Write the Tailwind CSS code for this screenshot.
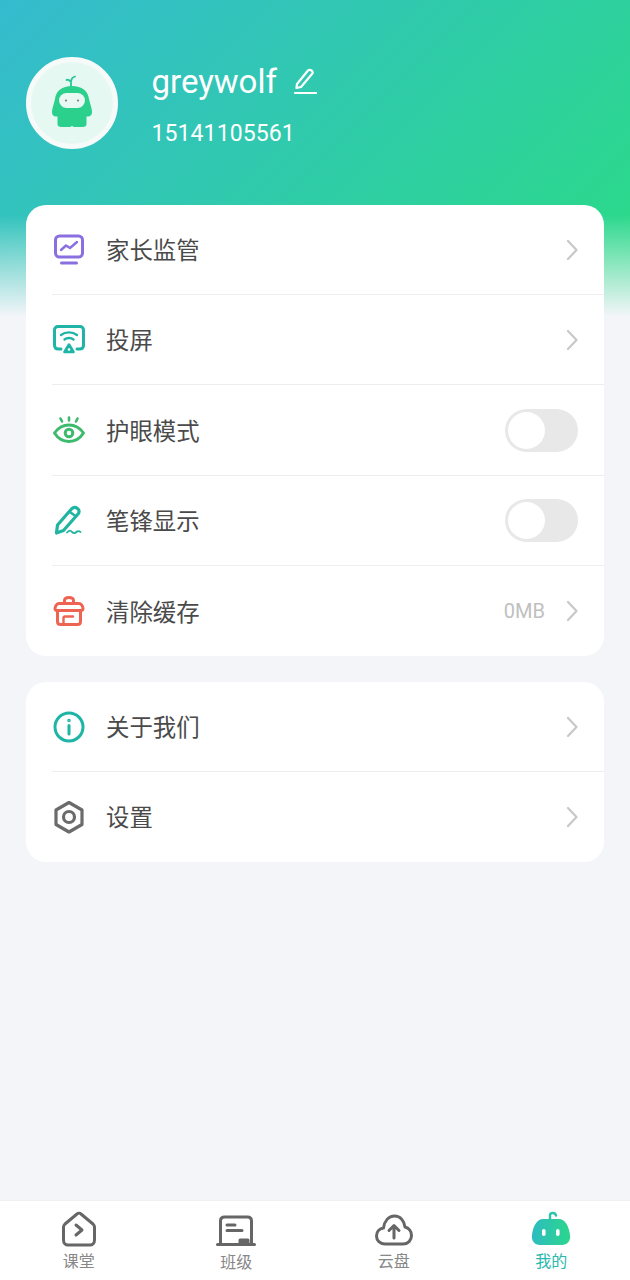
<!DOCTYPE html>
<html lang="zh-CN">
<head>
  <meta charset="UTF-8" />
  <meta name="viewport" content="width=device-width, initial-scale=1" />
  <title>我的</title>
  <script src="https://cdn.jsdelivr.net/npm/@tailwindcss/browser@4"></script>
</head>
<body class="m-0 bg-[#f4f5f9] font-['Roboto','Noto_Sans_CJK_SC',sans-serif]">
  <div class="relative w-[630px] h-[1280px] overflow-hidden flex flex-col">
    <!-- header background -->
    <div class="absolute top-0 left-0 w-full h-[316px] bg-[linear-gradient(135deg,#35bbcf_0%,#2bd98a_92%)]"></div>
    <div class="absolute top-[215px] left-0 w-full h-[102px] bg-gradient-to-b from-[#f4f5f9]/0 to-[#f4f5f9]"></div>

    <div class="relative flex-1 flex flex-col">
      <!-- profile -->
      <header class="h-[205px] flex items-start pl-[26px] pt-[57px] gap-[33.500px] shrink-0">
        <div class="w-[92px] h-[92px] rounded-full bg-[#e6f8f2] border-[5px] border-[#f6fbfa] flex items-center justify-center">
          <svg width="46" height="56" viewBox="0 0 46 56">
            <path d="M22 12V6M22 7C20 4.500 18 4.500 17.500 5M22 6C22.500 3.500 24 2 26 1.500" fill="none" stroke="#29c59a" stroke-width="1.800" stroke-linecap="round"/>
            <path d="M23 11C13 11 7 16 6 24C5 29 3 33 3 37C3 41 6 42 8.500 41.500V49C8.500 51 10 52 12 52H20C21.500 52 22.500 51.500 23 50.500C23.500 51.500 24.500 52 26 52H34C36 52 37.500 51 37.500 49V41.500C40 42 43 41 43 37C43 33 41 29 40 24C39 16 33 11 23 11Z" fill="#2bd08d"/>
            <rect x="10" y="18" width="26" height="15" rx="7.500" fill="#e8f8f3"/>
            <circle cx="17" cy="25.500" r="0.900" fill="#666"/>
            <circle cx="29" cy="25.500" r="0.900" fill="#666"/>
          </svg>
        </div>
        <div class="flex flex-col text-white">
          <div class="flex items-center h-[50px]">
            <span class="text-[33px] leading-[50px]">greywolf</span>
            <svg class="ml-[16px] mb-[2px]" width="24" height="28" viewBox="0 0 24 28" fill="none" stroke="#fff" stroke-width="2.200" stroke-linecap="round" stroke-linejoin="round">
              <path d="M4 17L15 3.500C16 2.500 17 2.500 18.500 3.500C20 4.500 20 6 19 7L8 20L3.500 21Z"/>
              <path d="M2 26H23"/>
            </svg>
          </div>
          <span class="text-[23px] leading-[30px] mt-[12px] tracking-[0.1px]">15141105561</span>
        </div>
      </header>

      <main class="px-[26px] flex flex-col gap-[26px]">
        <!-- card 1 -->
        <section class="bg-white rounded-[20px] pl-[26px] h-[451px] flex flex-col">
          <div class="h-[90px] border-b border-[#eeeeee] flex items-center pr-[26px]">
            <svg class="w-[34px] h-[34px] shrink-0" viewBox="0 0 34 34" fill="none" stroke="#8a6fe0" stroke-width="3" stroke-linecap="round" stroke-linejoin="round">
              <rect x="3.500" y="3" width="27" height="21" rx="4"/>
              <path d="M9 17L14 12.500L18 15L25 9" stroke-width="2.400"/>
              <path d="M9.500 30H24.500"/>
            </svg>
            <span class="ml-[20px] flex-1 text-[23.400px] pt-[5px] text-[#4a4a4a]">家长监管</span>
            <svg width="12" height="22" viewBox="0 0 12 22" fill="none" stroke="#c8c8c8" stroke-width="2.200" stroke-linecap="round" stroke-linejoin="round"><path d="M2 2L10.500 11L2 20"/></svg>
          </div>
          <div class="h-[90px] border-b border-[#eeeeee] flex items-center pr-[26px]">
            <svg class="w-[34px] h-[34px] shrink-0" viewBox="0 0 34 34" fill="none" stroke="#1fb5a6" stroke-width="3" stroke-linecap="round" stroke-linejoin="round">
              <path d="M9 26H6.500C4 26 2.500 24.500 2.500 22V7C2.500 5 4 3.500 6 3.500H28C30 3.500 31.500 5 31.500 7V22C31.500 24.500 30 26 27.500 26H25"/>
              <path d="M9 12C13.500 8.500 20.500 8.500 25 12" stroke-width="2.400"/>
              <path d="M12.500 16.500C15 14.500 19 14.500 21.500 16.500" stroke-width="2.400"/>
              <path d="M17 21.500L21.500 29H12.500Z" stroke-width="2.600" fill="#1fb5a6"/>
              <circle cx="17" cy="26.500" r="1.300" fill="#fff" stroke="none"/>
            </svg>
            <span class="ml-[20px] flex-1 text-[23.400px] pt-[5px] text-[#4a4a4a]">投屏</span>
            <svg width="12" height="22" viewBox="0 0 12 22" fill="none" stroke="#c8c8c8" stroke-width="2.200" stroke-linecap="round" stroke-linejoin="round"><path d="M2 2L10.500 11L2 20"/></svg>
          </div>
          <div class="h-[91px] border-b border-[#eeeeee] flex items-center pr-[26px]">
            <svg class="w-[34px] h-[34px] shrink-0" viewBox="0 0 34 34" fill="none" stroke="#3dbb6d" stroke-width="3" stroke-linecap="round" stroke-linejoin="round">
              <path d="M2.500 20C6 15 11 12 17 12C23 12 28 15 31.500 20C28 25.500 23 28.500 17 28.500C11 28.500 6 25.500 2.500 20Z"/>
              <circle cx="17" cy="20" r="3.800"/>
              <path d="M17 4.500V7.500M8.500 5.500L10 8.500M25.500 5.500L24 8.500" stroke-width="2.600"/>
            </svg>
            <span class="ml-[20px] flex-1 text-[23.400px] pt-[5px] text-[#4a4a4a]">护眼模式</span>
            <div class="w-[73px] h-[43px] rounded-full bg-[#e8e8e8] p-[3px]">
              <div class="w-[37px] h-[37px] rounded-full bg-white"></div>
            </div>
          </div>
          <div class="h-[90px] border-b border-[#eeeeee] flex items-center pr-[26px]">
            <svg class="w-[34px] h-[34px] shrink-0" viewBox="0 0 34 34" fill="none" stroke="#1fb5a0" stroke-width="3.200" stroke-linecap="round" stroke-linejoin="round">
              <path d="M5.500 21L19.500 5C21 3.500 23.500 3 25.500 4.500C27.500 6 27.500 8.500 26 10L11.500 26.500L4.500 29Z"/>
              <path d="M18 8L24 12.500" stroke-width="2.400"/>
              <path d="M15 28.500C17 26 18.500 26 20 28C21.500 29.500 23 29.500 24.500 28C25.500 27 27 27 28.500 28" stroke-width="1.800"/>
            </svg>
            <span class="ml-[20px] flex-1 text-[23.400px] pt-[5px] text-[#4a4a4a]">笔锋显示</span>
            <div class="w-[73px] h-[43px] rounded-full bg-[#e8e8e8] p-[3px]">
              <div class="w-[37px] h-[37px] rounded-full bg-white"></div>
            </div>
          </div>
          <div class="flex-1 flex items-center pr-[26px]">
            <svg class="w-[34px] h-[34px] shrink-0" viewBox="0 0 34 34" fill="none" stroke="#ee6352" stroke-width="3" stroke-linecap="round" stroke-linejoin="round">
              <path d="M12.500 9.500V6.500C12.500 4.500 14.500 3.500 17 3.500C19.500 3.500 21.500 4.500 21.500 6.500V9.500"/>
              <path d="M7 9.500H27C29 9.500 31 12 31 14.500C31 16 30 16.500 28.500 16.500H5.500C4 16.500 3 16 3 14.500C3 12 5 9.500 7 9.500Z"/>
              <path d="M5.500 17V27.500C5.500 29 6.500 30.500 8.500 30.500H25.500C27.500 30.500 28.500 29 28.500 27.500V17"/>
              <path d="M11.500 30V24C11.500 23 12 22.500 13 22.500H21" stroke-width="2.400"/>
            </svg>
            <span class="ml-[20px] flex-1 text-[23.400px] pt-[5px] text-[#4a4a4a]">清除缓存</span>
            <span class="text-[20px] text-[#c0c0c0] mr-[21px]">0MB</span>
            <svg width="12" height="22" viewBox="0 0 12 22" fill="none" stroke="#c8c8c8" stroke-width="2.200" stroke-linecap="round" stroke-linejoin="round"><path d="M2 2L10.500 11L2 20"/></svg>
          </div>
        </section>

        <!-- card 2 -->
        <section class="bg-white rounded-[20px] pl-[26px] h-[180px] flex flex-col">
          <div class="h-[90px] border-b border-[#eeeeee] flex items-center pr-[26px]">
            <svg class="w-[34px] h-[34px] shrink-0" viewBox="0 0 34 34" fill="none" stroke="#1fb5a6" stroke-width="3" stroke-linecap="round">
              <circle cx="17" cy="17" r="14"/>
              <path d="M17 15.500V24"/>
              <circle cx="17" cy="10.500" r="0.700" stroke-width="2.200"/>
            </svg>
            <span class="ml-[20px] flex-1 text-[23.400px] pt-[5px] text-[#4a4a4a]">关于我们</span>
            <svg width="12" height="22" viewBox="0 0 12 22" fill="none" stroke="#c8c8c8" stroke-width="2.200" stroke-linecap="round" stroke-linejoin="round"><path d="M2 2L10.500 11L2 20"/></svg>
          </div>
          <div class="flex-1 flex items-center pr-[26px]">
            <svg class="w-[34px] h-[34px] shrink-0" viewBox="0 0 34 34" fill="none" stroke="#6b6b6b" stroke-width="3.200" stroke-linejoin="round">
              <path d="M17 2.500L30 10V24.500L17 32L4 24.500V10Z"/>
              <circle cx="17" cy="17" r="5.500"/>
            </svg>
            <span class="ml-[20px] flex-1 text-[23.400px] pt-[4px] text-[#4a4a4a]">设置</span>
            <svg width="12" height="22" viewBox="0 0 12 22" fill="none" stroke="#c8c8c8" stroke-width="2.200" stroke-linecap="round" stroke-linejoin="round"><path d="M2 2L10.500 11L2 20"/></svg>
          </div>
        </section>
      </main>
    </div>

    <!-- bottom nav -->
    <nav class="relative h-[80px] bg-white border-t border-[#f0f0f0] grid grid-cols-4 shrink-0 text-[16px] text-[#888888]">
      <div class="flex flex-col items-center pt-[10px]">
        <svg width="34" height="36" viewBox="0 0 34 36" fill="none" stroke="#666666" stroke-width="3" stroke-linecap="round" stroke-linejoin="round">
          <path d="M3 13L15 3C16 2 18 2 19 3L31 13C32 14 32.500 15 32.500 16V29C32.500 32 30.500 34 28 34H6C3.500 34 1.500 32 1.500 29V16C1.500 15 2 14 3 13Z"/>
          <path d="M14 14L20 19L14 24"/>
        </svg>
        <span class="leading-[22px] mt-[4px]">课堂</span>
      </div>
      <div class="flex flex-col items-center pt-[10px]">
        <svg class="mt-[4px]" width="40" height="32" viewBox="0 0 40 32" fill="none" stroke="#666666" stroke-width="3" stroke-linecap="round" stroke-linejoin="round">
          <path d="M4.500 29V6C4.500 3.500 6 2 8.500 2H31.500C34 2 35.500 3.500 35.500 6V29"/>
          <path d="M1.500 29.500H38.500"/>
          <path d="M11 10H19M11 15.500H26"/>
          <rect x="24" y="25" width="8" height="4" fill="#666666"/>
        </svg>
        <span class="leading-[22px] mt-[5px]">班级</span>
      </div>
      <div class="flex flex-col items-center pt-[10px]">
        <svg class="mt-[2px]" width="38" height="34" viewBox="0 0 38 34" fill="none" stroke="#666666" stroke-width="3" stroke-linecap="round" stroke-linejoin="round">
          <path d="M10 31C5 31 1.500 27.500 1.500 23C1.500 18.500 4.500 15.500 8.500 15C9.500 8 13.500 3 19.500 3C25.500 3 29 8 30 14C34 15 36.500 18.500 36.500 22.500C36.500 27.500 33 31 28 31Z"/>
          <path d="M19 25V13M14 17.500L19 12.500L24 17.500"/>
        </svg>
        <span class="leading-[22px] mt-[4px]">云盘</span>
      </div>
      <div class="flex flex-col items-center pt-[10px] text-[#2bb8ae]">
        <svg width="40" height="36" viewBox="0 0 40 36">
          <defs>
            <linearGradient id="me" x1="0" y1="0" x2="1" y2="0">
              <stop offset="0" stop-color="#2ebcc0"/>
              <stop offset="1" stop-color="#2bd68c"/>
            </linearGradient>
          </defs>
          <path d="M19 9V4.500C19 1.500 24 1 25 4.500" fill="none" stroke="#2cc4ad" stroke-width="2.400" stroke-linecap="round"/>
          <path d="M12 8H28C34 8 38 15 39 24C40 30 36 34 31 34H9C4 34 0 30 1 24C2 15 6 8 12 8Z" fill="url(#me)"/>
          <rect x="11" y="18" width="3.600" height="7" rx="1.800" fill="#fff"/>
          <rect x="25" y="18" width="3.600" height="7" rx="1.800" fill="#fff"/>
        </svg>
        <span class="leading-[22px] mt-[4px]">我的</span>
      </div>
    </nav>
  </div>
</body>
</html>
